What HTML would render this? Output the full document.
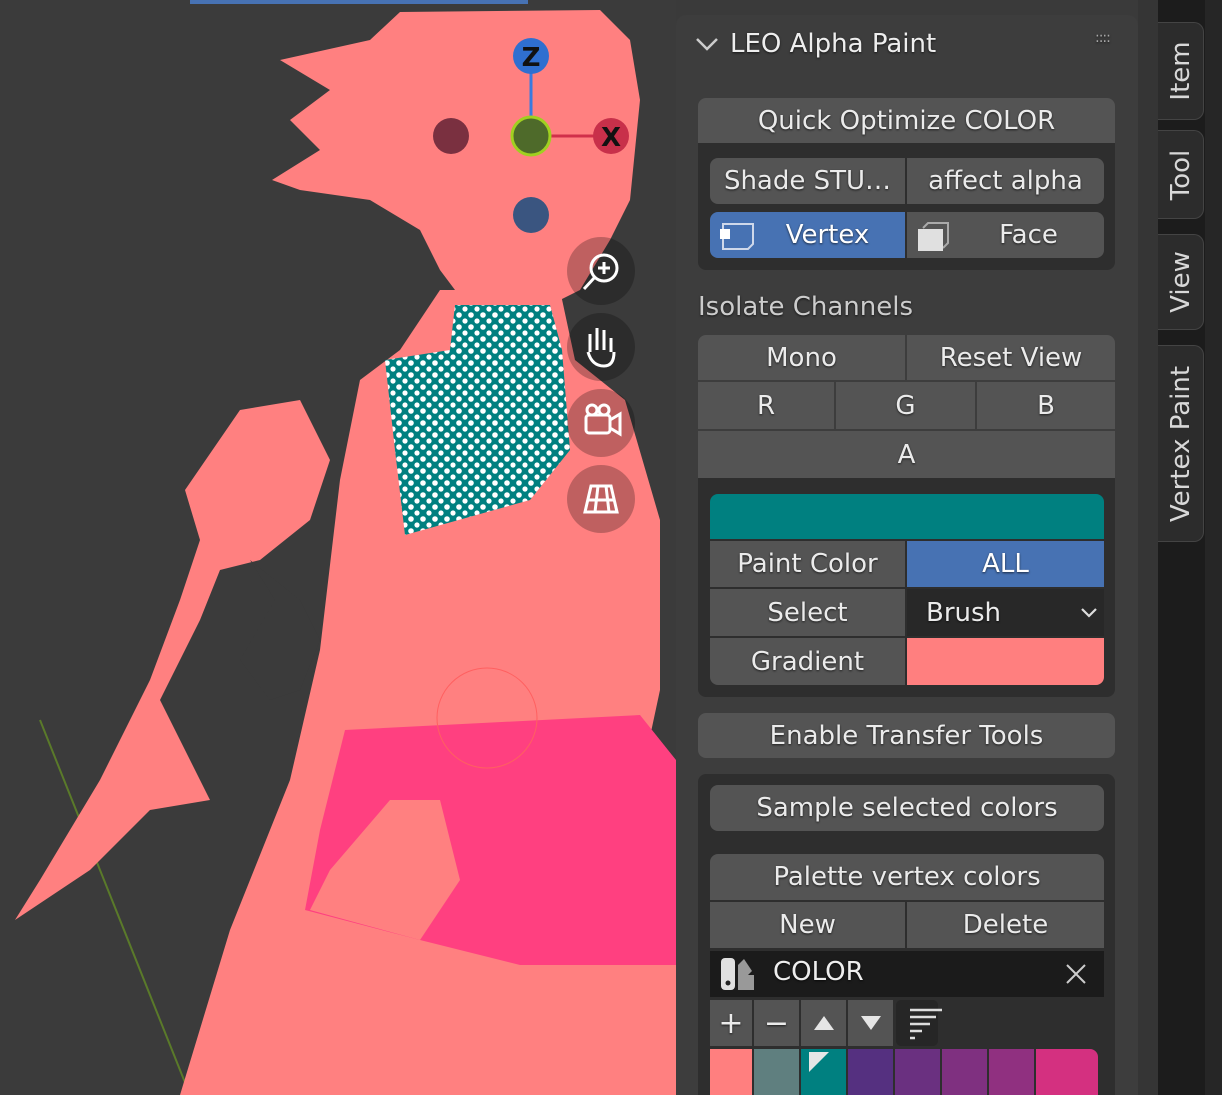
<!DOCTYPE html>
<html><head><meta charset="utf-8">
<style>
*{margin:0;padding:0;box-sizing:border-box}
body{width:1222px;height:1095px;overflow:hidden;background:#3a3a3a;font-family:"DejaVu Sans","Liberation Sans",sans-serif;position:relative}
.a{position:absolute}
.b{position:absolute;background:#545454;color:#ebebeb;font-size:26px;display:flex;align-items:center;justify-content:center;white-space:nowrap;text-shadow:0 1px 2px #000a}
.t{position:absolute;color:#ddd;font-size:26px;text-shadow:0 1px 2px #000a;white-space:nowrap}
.tab{position:absolute;left:1158px;width:46px;background:#2c2c2c;border-radius:0 10px 10px 0;border:1px solid #444;border-left:none}
.tab span{position:absolute;left:50%;top:50%;transform:translate(-50%,-50%) rotate(-90deg);color:#d8d8d8;font-size:26px;white-space:nowrap}
</style></head><body>
<svg class="a" style="left:0;top:0" width="676" height="1095">
<defs>
<pattern id="dots" width="12" height="12" patternUnits="userSpaceOnUse">
<rect width="12" height="12" fill="#008080"/><circle cx="3" cy="3" r="2.8" fill="#fff"/><circle cx="9" cy="9" r="2.6" fill="#fff"/>
</pattern>
</defs>
<rect width="676" height="1095" fill="#3b3b3b"/>
<rect x="190" y="0" width="338" height="4" fill="#4772b3"/>
<line x1="40" y1="720" x2="190" y2="1095" stroke="#5a7a2a" stroke-width="2"/>
<polygon fill="#ff8080" points="240,410 300,400 330,460 310,520 260,560 220,570 200,620 160,700 190,760 210,800 150,810 90,870 15,920 40,880 100,780 150,680 180,600 200,540 185,490"/>
<polygon fill="#ff8080" points="440,290 560,290 575,360 625,400 660,520 660,690 645,760 676,790 676,1095 180,1095 230,930 290,780 320,650 340,480 360,380 400,350"/>
<polygon fill="#ff8080" points="280,60 370,40 400,12 600,10 630,40 640,100 630,200 610,240 580,290 540,310 470,310 440,270 420,230 370,200 300,190 272,180 320,150 290,120 330,90"/>
<polygon fill="#3b3b3b" points="250,560 275,600 240,660 270,700 300,690 320,640 300,600"/>
<polygon fill="#ff4080" points="345,730 640,715 676,760 676,965 520,965 420,940 305,910 320,830"/>
<polygon fill="#ff8080" points="330,870 390,800 440,800 460,880 420,940 310,910"/>
<polygon fill="url(#dots)" points="385,360 450,350 455,305 550,305 562,350 570,450 530,500 405,535 395,450"/>
<circle cx="487" cy="718" r="50" fill="none" stroke="#ff6060" stroke-width="1"/>
<line x1="531" y1="56" x2="531" y2="136" stroke="#3a7ae0" stroke-width="3"/>
<line x1="531" y1="136" x2="611" y2="136" stroke="#d0304a" stroke-width="3"/>
<circle cx="451" cy="136" r="18" fill="#7a3040"/>
<circle cx="531" cy="215" r="18" fill="#3a5580"/>
<circle cx="531" cy="136" r="19" fill="#4e6a2a" stroke="#a0d020" stroke-width="3"/>
<circle cx="531" cy="56" r="18" fill="#2f6fd0"/>
<text x="531" y="66" font-size="26" font-weight="bold" fill="#111" text-anchor="middle" font-family="DejaVu Sans">Z</text>
<circle cx="611" cy="136" r="18" fill="#c8304a"/>
<text x="611" y="146" font-size="26" font-weight="bold" fill="#111" text-anchor="middle" font-family="DejaVu Sans">X</text>
<g fill="#000" fill-opacity="0.25"><circle cx="601" cy="271" r="34"/><circle cx="601" cy="347" r="34"/><circle cx="601" cy="423" r="34"/><circle cx="601" cy="499" r="34"/></g>
<g stroke="#fff" stroke-width="3" fill="none">
<circle cx="604" cy="268" r="13"/><line x1="595" y1="277" x2="584" y2="289"/><line x1="598" y1="268" x2="610" y2="268"/><line x1="604" y1="262" x2="604" y2="274"/>
<path d="M590 352 v-18 M597 350 v-22 M604 350 v-20 M611 352 v-14 M588 352 q4 14 16 14 q10 0 10 -14"/>
<rect x="586" y="415" width="24" height="18" rx="3"/><path d="M610 420 l10 -6 v20 l-10 -6"/><circle cx="592" cy="410" r="5"/><circle cx="604" cy="410" r="5"/>
<path d="M585 512 l6 -26 h20 l6 26 z M588 500 h26 M598 486 l-3 26 M606 486 l3 26"/>
</g>
</svg>
<div class="a" style="left:676px;top:15px;width:462px;height:1080px;background:#3d3d3d;border-radius:10px 10px 0 0"></div>
<div class="a" style="left:1138px;top:0;width:20px;height:1095px;background:#353535"></div>
<div class="a" style="left:1158px;top:0;width:64px;height:1095px;background:#1c1c1c"></div>
<div class="a" style="left:1205px;top:0;width:17px;height:1095px;background:#262626"></div>
<div class="tab" style="top:22px;height:98px"><span>Item</span></div>
<div class="tab" style="top:130px;height:89px"><span>Tool</span></div>
<div class="tab" style="top:234px;height:96px"><span>View</span></div>
<div class="tab" style="top:345px;height:197px"><span>Vertex Paint</span></div>
<svg class="a" style="left:695px;top:36px" width="24" height="16"><path d="M2 3 L12 13 L22 3" stroke="#ccc" stroke-width="2.5" fill="none"/></svg>
<div class="t" style="left:730px;top:29px;color:#eee">LEO Alpha Paint</div>
<div class="t" style="left:1095px;top:30px;font-size:14px;color:#aaa;letter-spacing:-1px">::::</div>
<div class="a" style="left:698px;top:143px;width:417px;height:127px;background:#2e2e2e;border-radius:0 0 8px 8px"></div>
<div class="b" style="left:698px;top:98px;width:417px;height:45px;border-radius:8px 8px 0 0">Quick Optimize COLOR</div>
<div class="b" style="left:710px;top:158px;width:195px;height:46px;border-radius:8px 0 0 8px">Shade STU…</div>
<div class="b" style="left:907px;top:158px;width:197px;height:46px;border-radius:0 8px 8px 0">affect alpha</div>
<div class="b" style="left:710px;top:212px;width:195px;height:46px;border-radius:8px 0 0 8px;background:#4772b3;padding-left:40px;color:#fff">Vertex</div>
<div class="b" style="left:907px;top:212px;width:197px;height:46px;border-radius:0 8px 8px 0;padding-left:46px">Face</div>
<svg class="a" style="left:718px;top:218px" width="40" height="34"><path d="M5 6 h30 v20 l-5 5 h-25z" fill="none" stroke="#cfd8ea" stroke-width="2"/><rect x="2" y="11" width="10" height="10" fill="#fff"/></svg>
<svg class="a" style="left:915px;top:218px" width="40" height="34"><path d="M8 10 l5 -5 h20 v20 l-5 5" fill="none" stroke="#aaa" stroke-width="2"/><rect x="3" y="11" width="25" height="22" fill="#e0e0e0"/></svg>
<div class="t" style="left:698px;top:292px;color:#ccc">Isolate Channels</div>
<div class="b" style="left:698px;top:335px;width:207px;height:45px;border-radius:8px 0 0 0">Mono</div>
<div class="b" style="left:907px;top:335px;width:208px;height:45px;border-radius:0 8px 0 0">Reset View</div>
<div class="b" style="left:698px;top:382px;width:136px;height:47px">R</div>
<div class="b" style="left:836px;top:382px;width:139px;height:47px">G</div>
<div class="b" style="left:977px;top:382px;width:138px;height:47px">B</div>
<div class="b" style="left:698px;top:431px;width:417px;height:47px">A</div>
<div class="a" style="left:698px;top:478px;width:417px;height:219px;background:#2e2e2e;border-radius:0 0 8px 8px"></div>
<div class="a" style="left:710px;top:494px;width:394px;height:45px;background:#008080;border-radius:8px 8px 0 0"></div>
<div class="b" style="left:710px;top:541px;width:195px;height:46px">Paint Color</div>
<div class="b" style="left:907px;top:541px;width:197px;height:46px;background:#4772b3;color:#fff">ALL</div>
<div class="b" style="left:710px;top:589px;width:195px;height:47px">Select</div>
<div class="b" style="left:907px;top:589px;width:197px;height:47px;background:#282828;justify-content:flex-start;padding-left:19px">Brush</div>
<svg class="a" style="left:1080px;top:606px" width="18" height="14"><path d="M2 3 L9 10 L16 3" stroke="#ddd" stroke-width="2.2" fill="none"/></svg>
<div class="b" style="left:710px;top:638px;width:195px;height:47px;border-radius:0 0 0 8px">Gradient</div>
<div class="a" style="left:907px;top:638px;width:197px;height:47px;background:#ff7f7f;border-radius:0 0 8px 0"></div>
<div class="b" style="left:698px;top:713px;width:417px;height:45px;border-radius:8px">Enable Transfer Tools</div>
<div class="a" style="left:698px;top:774px;width:417px;height:321px;background:#2e2e2e;border-radius:8px 8px 0 0"></div>
<div class="b" style="left:710px;top:785px;width:394px;height:46px;border-radius:8px">Sample selected colors</div>
<div class="b" style="left:710px;top:854px;width:394px;height:46px;border-radius:8px 8px 0 0">Palette vertex colors</div>
<div class="b" style="left:710px;top:902px;width:195px;height:46px">New</div>
<div class="b" style="left:907px;top:902px;width:197px;height:46px">Delete</div>
<div class="a" style="left:710px;top:951px;width:394px;height:46px;background:#1b1b1b"></div>
<svg class="a" style="left:718px;top:955px" width="40" height="38"><rect x="3" y="3" width="14" height="32" rx="4" fill="#e0e0e0"/><circle cx="10" cy="28" r="2.5" fill="#222"/><path d="M20 10 l6 -6 l8 12 l-14 14z" fill="#999"/><rect x="20" y="20" width="16" height="15" fill="#999"/></svg>
<div class="t" style="left:773px;top:957px;color:#eee;font-size:26px">COLOR</div>
<svg class="a" style="left:1065px;top:963px" width="22" height="22"><path d="M2 2 L20 20 M20 2 L2 20" stroke="#ccc" stroke-width="2"/></svg>
<div class="b" style="left:710px;top:1000px;width:42px;height:46px;font-size:30px">+</div>
<div class="b" style="left:754px;top:1000px;width:45px;height:46px;font-size:30px">−</div>
<div class="b" style="left:801px;top:1000px;width:45px;height:46px"><svg width="20" height="14"><path d="M10 0 L20 14 H0z" fill="#e6e6e6"/></svg></div>
<div class="b" style="left:848px;top:1000px;width:45px;height:46px"><svg width="20" height="14"><path d="M0 0 H20 L10 14z" fill="#e6e6e6"/></svg></div>
<div class="a" style="left:896px;top:1000px;width:42px;height:46px;background:#262626;border-radius:5px"></div>
<svg class="a" style="left:908px;top:1007px" width="36" height="34"><g stroke="#ddd" stroke-width="2.5"><line x1="2" y1="3" x2="34" y2="3"/><line x1="2" y1="10" x2="28" y2="10"/><line x1="2" y1="17" x2="22" y2="17"/><line x1="2" y1="24" x2="14" y2="24"/><line x1="2" y1="31" x2="7" y2="31"/></g></svg>
<div class="a" style="left:710px;top:1049px;width:42px;height:46px;background:#ff7f7f"></div>
<div class="a" style="left:754px;top:1049px;width:45px;height:46px;background:#5f7f7f"></div>
<div class="a" style="left:801px;top:1049px;width:45px;height:46px;background:#008080"></div>
<svg class="a" style="left:809px;top:1052px" width="22" height="22"><path d="M0 0 H20 L0 20z" fill="#e6e6e6"/></svg>
<div class="a" style="left:848px;top:1049px;width:45px;height:46px;background:#553080"></div>
<div class="a" style="left:895px;top:1049px;width:45px;height:46px;background:#6a3080"></div>
<div class="a" style="left:942px;top:1049px;width:45px;height:46px;background:#7f3080"></div>
<div class="a" style="left:989px;top:1049px;width:45px;height:46px;background:#903080"></div>
<div class="a" style="left:1036px;top:1049px;width:62px;height:46px;background:#d43080;border-radius:0 8px 0 0"></div>
</body></html>
